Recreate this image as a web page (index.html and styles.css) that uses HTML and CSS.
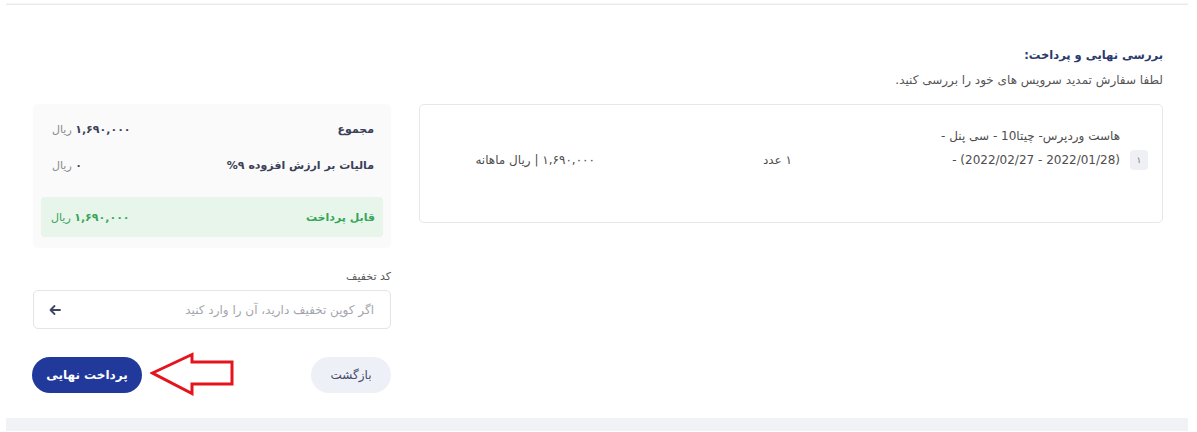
FILE: index.html
```html
<!DOCTYPE html>
<html lang="fa" dir="rtl">
<head>
<meta charset="utf-8">
<title>بررسی نهایی و پرداخت</title>
<link rel="stylesheet" href="styles.css">
</head>
<body>
<div class="page">
  <div class="card">
    <div class="head">
      <h2 class="title">بررسی نهایی و پرداخت:</h2>
      <p class="subtitle">لطفا سفارش تمدید سرویس های خود را بررسی کنید.</p>
    </div>
    <div class="cols">
      <div class="items">
        <div class="item-row">
          <div class="cell cell-name">
            <span class="badge">۱</span>
            <div class="name">هاست وردپرس- چیتا10 - سی پنل -<br>(2022/01/28 - 2022/02/27) -</div>
          </div>
          <div class="cell cell-qty">۱ عدد</div>
          <div class="cell cell-price">۱,۶۹۰,۰۰۰ | ریال ماهانه</div>
        </div>
      </div>
      <div class="side">
        <div class="summary">
          <div class="sum-row">
            <span class="sum-label">مجموع</span>
            <span class="sum-val"><b>۱,۶۹۰,۰۰۰</b> ریال</span>
          </div>
          <div class="sum-row">
            <span class="sum-label">مالیات بر ارزش افزوده ۹%</span>
            <span class="sum-val"><b>۰</b> ریال</span>
          </div>
          <div class="sum-row sum-total">
            <span class="sum-label">قابل پرداخت</span>
            <span class="sum-val"><b>۱,۶۹۰,۰۰۰</b> ریال</span>
          </div>
        </div>
        <label class="disc-label">کد تخفیف</label>
        <div class="disc-input">
          <span class="placeholder">اگر کوپن تخفیف دارید، آن را وارد کنید</span>
          <svg class="arrow-ico" width="12" height="12" viewBox="0 0 12 12"><path d="M11 6H1.5M5.5 2L1.5 6l4 4" fill="none" stroke="#3f4660" stroke-width="1.8" stroke-linecap="round" stroke-linejoin="round"/></svg>
        </div>
        <div class="actions">
          <button class="btn btn-back">بازگشت</button>
          <button class="btn btn-pay">پرداخت نهایی</button>
        </div>
        <svg class="annot" width="86" height="46" viewBox="0 0 86 46"><path d="M2.5 22 L42 3.5 L42 11 L82 11 L82 33 L42 33 L42 42.5 Z" fill="none" stroke="#e3141c" stroke-width="3" stroke-linejoin="miter"/></svg>
      </div>
    </div>
  </div>
  <div class="footer-band"></div>
</div>
</body>
</html>
```
FILE: styles.css
```css
* { box-sizing: border-box; }
html, body { margin: 0; padding: 0; background: #ffffff; }
body {
  font-family: "DejaVu Sans", "Noto Sans", sans-serif;
  color: #4a4a4a;
  font-size: 12px;
}
.page { padding-top: 4px; }
.card {
  margin: 0 9px 0 6px;
  border-top: 1px solid #e9e9ec;
  box-shadow: 0 -1px 1px rgba(0,0,0,0.03);
  padding: 0 25px 0 27px;
  height: 414px;
}
.head { padding-top: 41px; }
.title {
  margin: 0;
  font-size: 11.5px;
  font-weight: bold;
  color: #2c3a6e;
  line-height: 18px;
}
.subtitle {
  margin: 7px 0 0;
  font-size: 12px;
  color: #555;
  line-height: 18px;
}
.cols {
  margin-top: 15px;
  display: grid;
  grid-template-columns: 1fr 358px;
  column-gap: 28px;
  align-items: start;
}
.items {
  border: 1px solid #e6e7eb;
  border-radius: 5px;
  height: 119px;
  padding: 19px 14px 0 0;
}
.item-row {
  display: flex;
  align-items: flex-end;
}
.cell { font-size: 12px; color: #4d4d4d; line-height: 24px; }
.cell-name {
  width: 356px;
  display: flex;
  align-items: flex-end;
  gap: 10px;
  padding-left: 10px;
}
.badge {
  flex: none;
  width: 18px;
  height: 20px;
  margin-bottom: 2px;
  border-radius: 4px;
  background: #eef0f5;
  color: #777;
  font-size: 9px;
  line-height: 20px;
  text-align: center;
}
.name { line-height: 24px; }
.cell-qty { width: 197px; padding-right: 0; }
.cell-price { flex: 1; }
.side { position: relative; }
.summary {
  background: #fafafa;
  border-radius: 5px;
  padding: 7px 8px 11px;
}
.sum-row {
  display: flex;
  justify-content: space-between;
  align-items: center;
  height: 36px;
  padding: 0 9px 0 11px;
}
.sum-label { font-size: 11px; font-weight: bold; color: #3b3f58; }
.sum-val { font-size: 11px; color: #8a8a8a; }
.sum-val b { color: #3b3f58; font-weight: bold; }
.sum-total {
  margin-top: 14px;
  height: 40px;
  background: #e7f5ea;
  border-radius: 4px;
  padding: 0 8px 0 10px;
}
.sum-total .sum-label, .sum-total .sum-val, .sum-total .sum-val b { color: #38a55a; }
.disc-label {
  display: block;
  margin-top: 21px;
  font-size: 11px;
  color: #555;
  line-height: 16px;
}
.disc-input {
  margin-top: 5px;
  height: 39px;
  border: 1px solid #e3e4e8;
  border-radius: 5px;
  display: flex;
  align-items: center;
  justify-content: space-between;
  padding: 0 16px 0 15px;
}
.placeholder { font-size: 12px; color: #a3a6ad; }
.arrow-ico { display: block; }
.actions {
  margin-top: 28px;
  display: flex;
  justify-content: space-between;
  align-items: center;
}
.btn {
  height: 36px;
  border: none;
  border-radius: 18px;
  font-family: inherit;
  font-size: 12px;
  padding: 0;
}
.btn-back { width: 80px; background: #eef0f8; color: #474c6a; }
.btn-pay { width: 110px; margin-left: -1px; background: #20399a; color: #fff; font-weight: bold; }
.annot {
  position: absolute;
  left: 117px;
  bottom: -4px;
}
.footer-band {
  margin: 0 9px 0 6px;
  height: 13px;
  background: #f1f2f5;
}
```
